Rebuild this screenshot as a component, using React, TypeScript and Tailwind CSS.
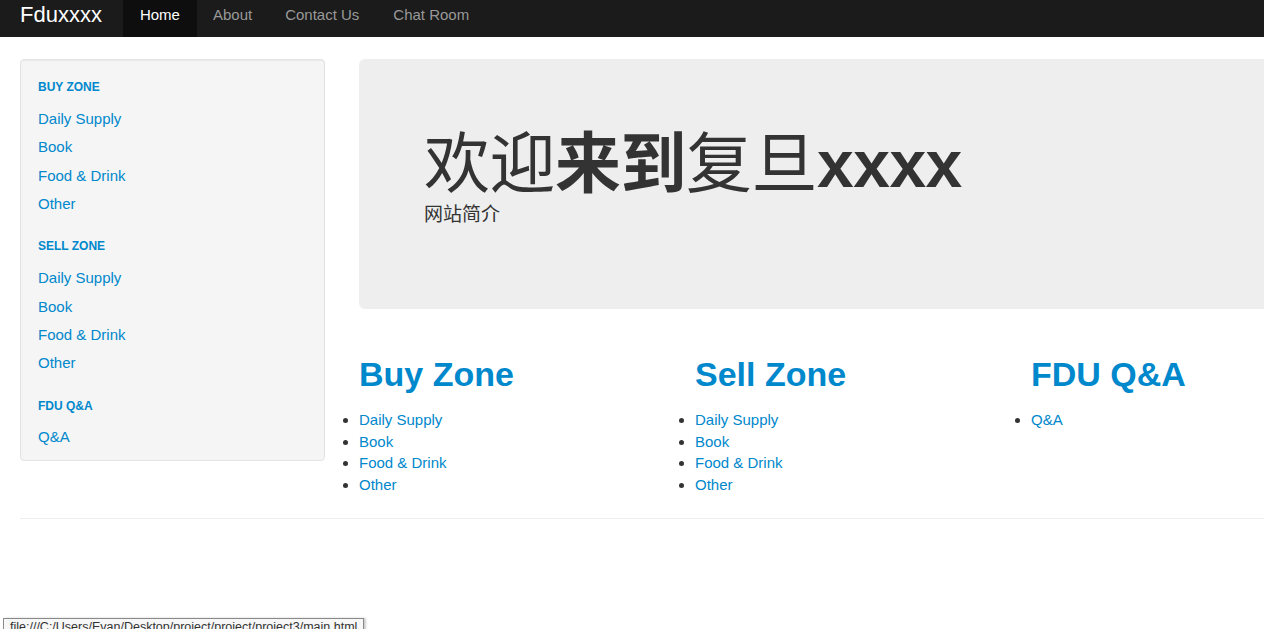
const sans = { fontFamily: '"Liberation Sans", Arial, "Noto Sans CJK SC", sans-serif' };

const zones = ["Daily Supply", "Book", "Food & Drink", "Other"];

function SideHeader({ children }: { children: React.ReactNode }) {
    return <li className="h-[20px] text-[12px] font-bold uppercase leading-[20px] text-[#0088cc]">{children}</li>;
}

function SideLink({ children }: { children: React.ReactNode }) {
    return (
        <li className="h-[28.33px] text-[15px] leading-[28.33px]">
            <a href="#" className="text-[#0088cc]">{children}</a>
        </li>
    );
}

function ZoneColumn({ title, items }: { title: string; items: string[] }) {
    return (
        <div>
            <h2 className="h-[34px] text-[34px] font-bold leading-[34px] text-[#0088cc]">{title}</h2>
            <ul className="mt-[18px] list-disc pl-0 text-[15px] leading-[21.7px] marker:text-[#333]">
                {items.map((item) => (
                    <li key={item}>
                        <a href="#" className="text-[#0088cc]">{item}</a>
                    </li>
                ))}
            </ul>
        </div>
    );
}

export default function App() {
    return (
        <div className="relative min-h-[629px] w-full overflow-hidden bg-white text-[#333]" style={sans}>
            {/* Navbar */}
            <div className="flex h-[37px] items-start bg-[#1b1b1b] pl-[20px]">
                <a href="#" className="mr-[21px] pt-[2px] text-[22px] leading-[26px] text-white">Fduxxxx</a>
                <ul className="flex h-full text-[15px]">
                    <li className="h-full bg-[#0e0e0e] px-[17px] pt-[5px] leading-[20px] text-white">Home</li>
                    <li className="h-full px-[16px] pt-[5px] leading-[20px] text-[#999]">About</li>
                    <li className="h-full px-[17px] pt-[5px] leading-[20px] text-[#999]">Contact Us</li>
                    <li className="h-full px-[17px] pt-[5px] leading-[20px] text-[#999]">Chat Room</li>
                </ul>
            </div>

            <div className="pl-[20px] pt-[22px]">
                <div className="flex items-start">
                    {/* Sidebar */}
                    <div className="w-[305px] shrink-0 rounded-[4px] border border-[#e3e3e3] bg-[#f5f5f5] pb-[9px] pl-[17px] pt-[17px] shadow-[inset_0_1px_1px_rgba(0,0,0,0.05)]">
                        <ul>
                            <SideHeader>Buy Zone</SideHeader>
                            <div className="h-[8px]" />
                            {zones.map((z) => <SideLink key={"b" + z}>{z}</SideLink>)}
                            <div className="h-[18px]" />
                            <SideHeader>Sell Zone</SideHeader>
                            <div className="h-[8px]" />
                            {zones.map((z) => <SideLink key={"s" + z}>{z}</SideLink>)}
                            <div className="h-[18px]" />
                            <SideHeader>FDU Q&amp;A</SideHeader>
                            <div className="h-[7px]" />
                            <SideLink>Q&amp;A</SideLink>
                        </ul>
                    </div>

                    {/* Main */}
                    <div className="ml-[34px] w-[1008px] shrink-0">
                        <div className="h-[250px] rounded-[6px] bg-[#eeeeee] pl-[65px] pt-[70px]">
                            <h1 className="text-[66px] font-bold leading-[70px] tracking-[-0.5px] text-[#333]">
                                <span className="font-normal">欢迎</span>来到<span className="font-normal">复旦</span>xxxx
                            </h1>
                            <p className="mt-[4px] text-[19px] leading-[24px] text-[#333]">网站简介</p>
                        </div>

                        <div className="mt-[48px] grid grid-cols-[336px_336px_336px]">
                            <ZoneColumn title="Buy Zone" items={zones} />
                            <ZoneColumn title="Sell Zone" items={zones} />
                            <ZoneColumn title="FDU Q&A" items={["Q&A"]} />
                        </div>
                    </div>
                </div>

                <hr className="mt-[22px] border-0 border-t border-[#eeeeee]" />
            </div>

            {/* Status bar tooltip */}
            <div className="absolute left-[3px] top-[618px] h-[20px] border border-[#8a8a8a] bg-[#f7f7f7] px-[6px] text-[12.5px] leading-[16px] text-[#333] shadow-[2px_0_2px_rgba(0,0,0,0.2)]">
                file:///C:/Users/Evan/Desktop/project/project/project3/main.html
            </div>
        </div>
    );
}
